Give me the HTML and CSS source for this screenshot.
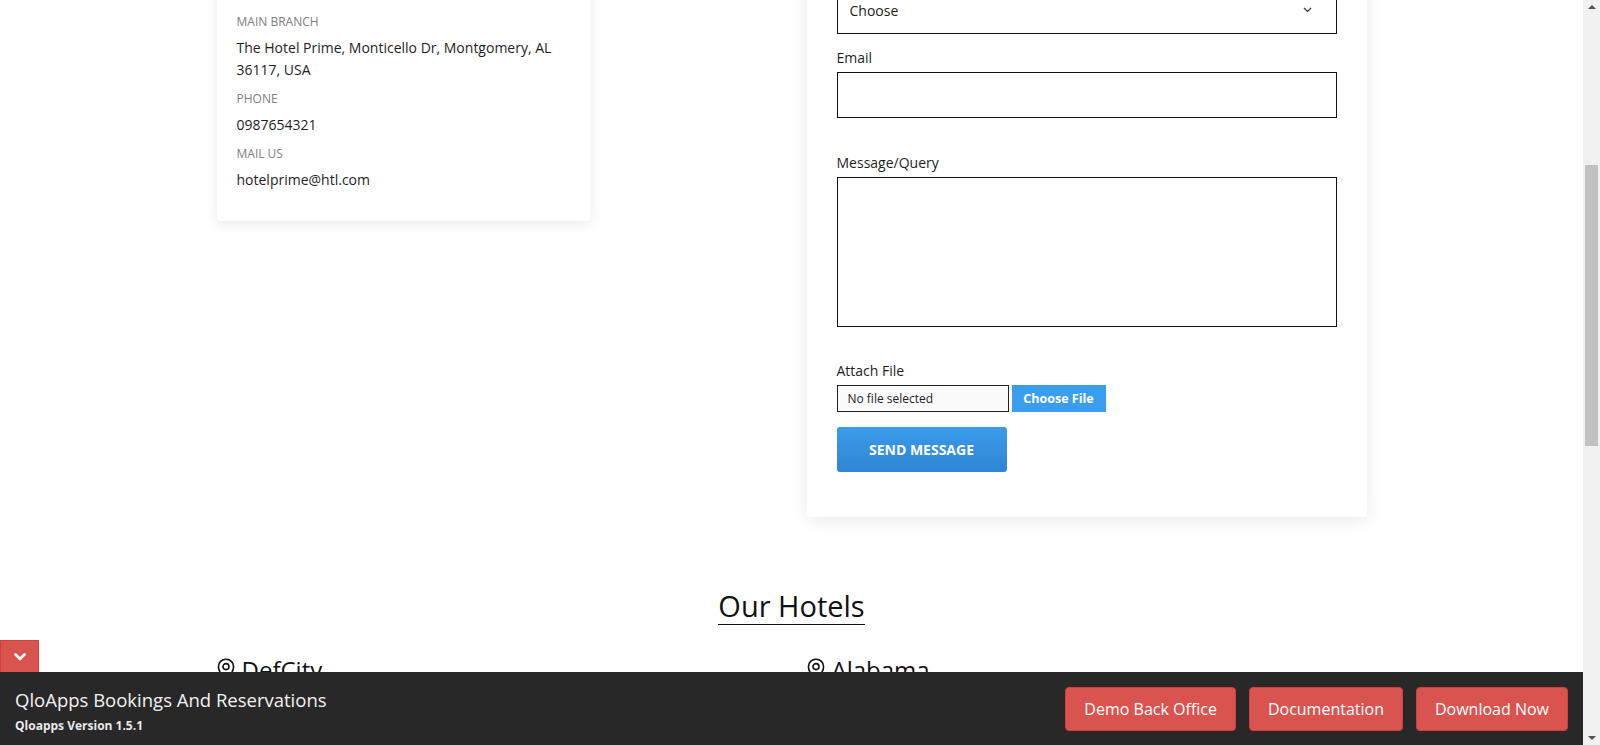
FILE: index.html
```html
<!DOCTYPE html>
<html lang="en">
<head>
<meta charset="utf-8">
<title>Contact - QloApps</title>
<link rel="stylesheet" href="styles.css">
</head>
<body>
<div class="viewport">
  <main class="page">
    <div class="container">
      <section class="contact-row">
        <div class="info-col">
          <div class="info-card">
            <p class="info-label">Main Branch</p>
            <p class="info-value">The Hotel Prime, Monticello Dr, Montgomery, AL 36117, USA</p>
            <p class="info-label">Phone</p>
            <p class="info-value">0987654321</p>
            <p class="info-label">Mail Us</p>
            <p class="info-value last">hotelprime@htl.com</p>
          </div>
        </div>
        <form class="form-card">
          <div class="select-box">
            <span>Choose</span>
            <svg class="select-caret" width="9" height="6" viewBox="0 0 9 6"><polyline points="1,1 4.5,4.5 8,1" fill="none" stroke="#333" stroke-width="1.2"/></svg>
          </div>
          <label class="field-label">Email</label>
          <div class="text-input"></div>
          <label class="field-label">Message/Query</label>
          <div class="text-area"></div>
          <label class="field-label">Attach File</label>
          <div class="file-row">
            <span class="file-name">No file selected</span>
            <span class="file-btn">Choose File</span>
          </div>
          <button type="button" class="send-btn">Send Message</button>
        </form>
      </section>

      <section class="hotels">
        <div class="hotels-head"><h2 class="hotels-title">Our Hotels</h2></div>
        <div class="hotels-row">
          <h3 class="hotel-name">
            <svg class="pin" width="18" height="24" viewBox="0 0 18 24"><path d="M9 1.2C4.7 1.2 1.4 4.5 1.4 8.7c0 5.3 7.6 13.8 7.6 13.8s7.6-8.5 7.6-13.8C16.6 4.5 13.3 1.2 9 1.2z" fill="none" stroke="#111" stroke-width="1.6"/><circle cx="9" cy="8.6" r="3" fill="none" stroke="#111" stroke-width="1.6"/></svg>
            DefCity
          </h3>
          <h3 class="hotel-name">
            <svg class="pin" width="18" height="24" viewBox="0 0 18 24"><path d="M9 1.2C4.7 1.2 1.4 4.5 1.4 8.7c0 5.3 7.6 13.8 7.6 13.8s7.6-8.5 7.6-13.8C16.6 4.5 13.3 1.2 9 1.2z" fill="none" stroke="#111" stroke-width="1.6"/><circle cx="9" cy="8.6" r="3" fill="none" stroke="#111" stroke-width="1.6"/></svg>
            Alabama
          </h3>
        </div>
      </section>
    </div>

    <footer class="demo-bar">
      <span class="bar-toggle">
        <svg width="12" height="8" viewBox="0 0 12 8"><polyline points="1.5,1.5 6,6 10.5,1.5" fill="none" stroke="#fff" stroke-width="2.6" stroke-linecap="round" stroke-linejoin="round"/></svg>
      </span>
      <div class="bar-info">
        <div class="bar-title">QloApps Bookings And Reservations</div>
        <div class="bar-version">Qloapps Version 1.5.1</div>
      </div>
      <div class="bar-actions">
        <a class="bar-btn">Demo Back Office</a>
        <a class="bar-btn">Documentation</a>
        <a class="bar-btn">Download Now</a>
      </div>
    </footer>
  </main>

  <aside class="scrollbar">
    <span class="sb-arrow up"></span>
    <div class="sb-track"><div class="sb-thumb"></div></div>
    <span class="sb-arrow down"></span>
  </aside>
</div>
</body>
</html>
```

FILE: styles.css
```css
* { box-sizing: border-box; }

html, body {
  margin: 0;
  padding: 0;
  height: 100%;
  overflow: hidden;
  background: #fff;
}

body {
  font-family: "Open Sans", "Noto Sans", Arial, sans-serif;
  color: #222;
  font-size: 14px;
}

.viewport {
  display: flex;
  height: 745px;
}

.page {
  flex: 1;
  position: relative;
  overflow: hidden;
}

.container {
  width: 1150px;
  margin: 0 auto;
}

/* contact row */
.contact-row {
  display: grid;
  grid-template-columns: 1fr 1fr;
  column-gap: 30px;
  align-items: start;
  margin-top: -42px;
}

.info-card {
  width: 373px;
  background: #fff;
  border-radius: 4px;
  box-shadow: 0 3px 14px rgba(0, 0, 0, 0.09);
  padding: 55px 20px 30px;
}

.info-card p { margin: 0; }

.info-label {
  font-size: 12px;
  line-height: 18px;
  color: #808080;
  text-transform: uppercase;
  margin-bottom: 6px !important;
}

.info-value {
  font-size: 14px;
  line-height: 22px;
  color: #1e1e1e;
  margin-bottom: 9px !important;
}

.info-value.last { margin-bottom: 0 !important; }

.form-card {
  background: #fff;
  border-radius: 4px;
  box-shadow: 0 3px 18px rgba(0, 0, 0, 0.09);
  padding: 30px 30px 45px;
  display: flex;
  flex-direction: column;
  align-items: flex-start;
}

.select-box {
  width: 100%;
  height: 46px;
  border: 1px solid #111;
  display: flex;
  align-items: center;
  justify-content: space-between;
  padding: 0 24px 2px 12px;
  font-size: 14px;
  color: #222;
  margin-bottom: 14px;
}

.select-caret { display: block; }

.field-label {
  display: block;
  font-size: 14px;
  line-height: 20px;
  color: #1e1e1e;
  margin-bottom: 4px;
}

.text-input {
  width: 100%;
  height: 46px;
  border: 1px solid #111;
  margin-bottom: 35px;
}

.text-area {
  width: 100%;
  height: 150px;
  border: 1px solid #111;
  margin-bottom: 34px;
}

.file-row {
  display: flex;
  gap: 3px;
  margin-bottom: 15px;
}

.file-name {
  width: 172px;
  height: 27px;
  border: 1px solid #222;
  background: #fafafa;
  font-size: 12px;
  line-height: 25px;
  padding-left: 10px;
  color: #222;
}

.file-btn {
  width: 94px;
  height: 27px;
  background: #3b9ded;
  color: #fff;
  font-size: 12.5px;
  font-weight: 700;
  line-height: 27px;
  text-align: center;
}

.send-btn {
  width: 170px;
  height: 45px;
  border: none;
  border-radius: 3px;
  background: linear-gradient(#3b9bec, #2f85d0);
  color: #fff;
  font-family: inherit;
  font-size: 14px;
  font-weight: 700;
  text-transform: uppercase;
  padding: 0;
}

/* hotels */
.hotels-head {
  text-align: center;
  margin-top: 71px;
}

.hotels-title {
  display: inline-block;
  margin: 0;
  font-size: 29px;
  line-height: 36px;
  font-weight: 400;
  color: #111;
  border-bottom: 1px solid #111;
}

.hotels-row {
  display: grid;
  grid-template-columns: 1fr 1fr;
  column-gap: 30px;
  margin-top: 30px;
}

.hotel-name {
  margin: 0;
  font-size: 24px;
  line-height: 30px;
  font-weight: 400;
  color: #111;
  display: flex;
  align-items: center;
  gap: 7px;
}

.pin { display: block; }

/* demo bar */
.demo-bar {
  position: absolute;
  left: 0;
  right: 0;
  bottom: 0;
  height: 73px;
  background: #282828;
  display: flex;
  justify-content: space-between;
  align-items: flex-start;
  padding: 15px 15px 0;
}

.bar-toggle {
  position: absolute;
  left: 0;
  bottom: 100%;
  width: 39px;
  height: 32px;
  background: #d9534f;
  border: 1px solid #d43f3a;
  border-bottom: none;
  display: flex;
  align-items: center;
  justify-content: center;
}

.bar-info { padding-top: 1px; }

.bar-title {
  font-size: 18.5px;
  line-height: 24px;
  color: #f2f2f2;
}

.bar-version {
  font-size: 12px;
  line-height: 18px;
  font-weight: 700;
  color: #eaeaea;
  margin-top: 5px;
}

.bar-actions {
  display: flex;
  gap: 13px;
}

.bar-btn {
  height: 44px;
  padding: 0 18px;
  background: #d9534f;
  border: 1px solid #d43f3a;
  border-radius: 4px;
  color: #fff;
  font-size: 16px;
  line-height: 42px;
}

/* scrollbar */
.scrollbar {
  width: 17px;
  background: #f1f1f1;
  display: flex;
  flex-direction: column;
  align-items: center;
}

.sb-arrow {
  width: 0;
  height: 0;
  border-left: 4px solid transparent;
  border-right: 4px solid transparent;
  margin: 5px 0;
}

.sb-arrow.up { border-bottom: 4px solid #505050; }
.sb-arrow.down { border-top: 4px solid #505050; }

.sb-track {
  flex: 1;
  width: 100%;
  padding: 151px 2px 0;
}

.sb-thumb {
  height: 281px;
  background: #c1c1c1;
}
```
